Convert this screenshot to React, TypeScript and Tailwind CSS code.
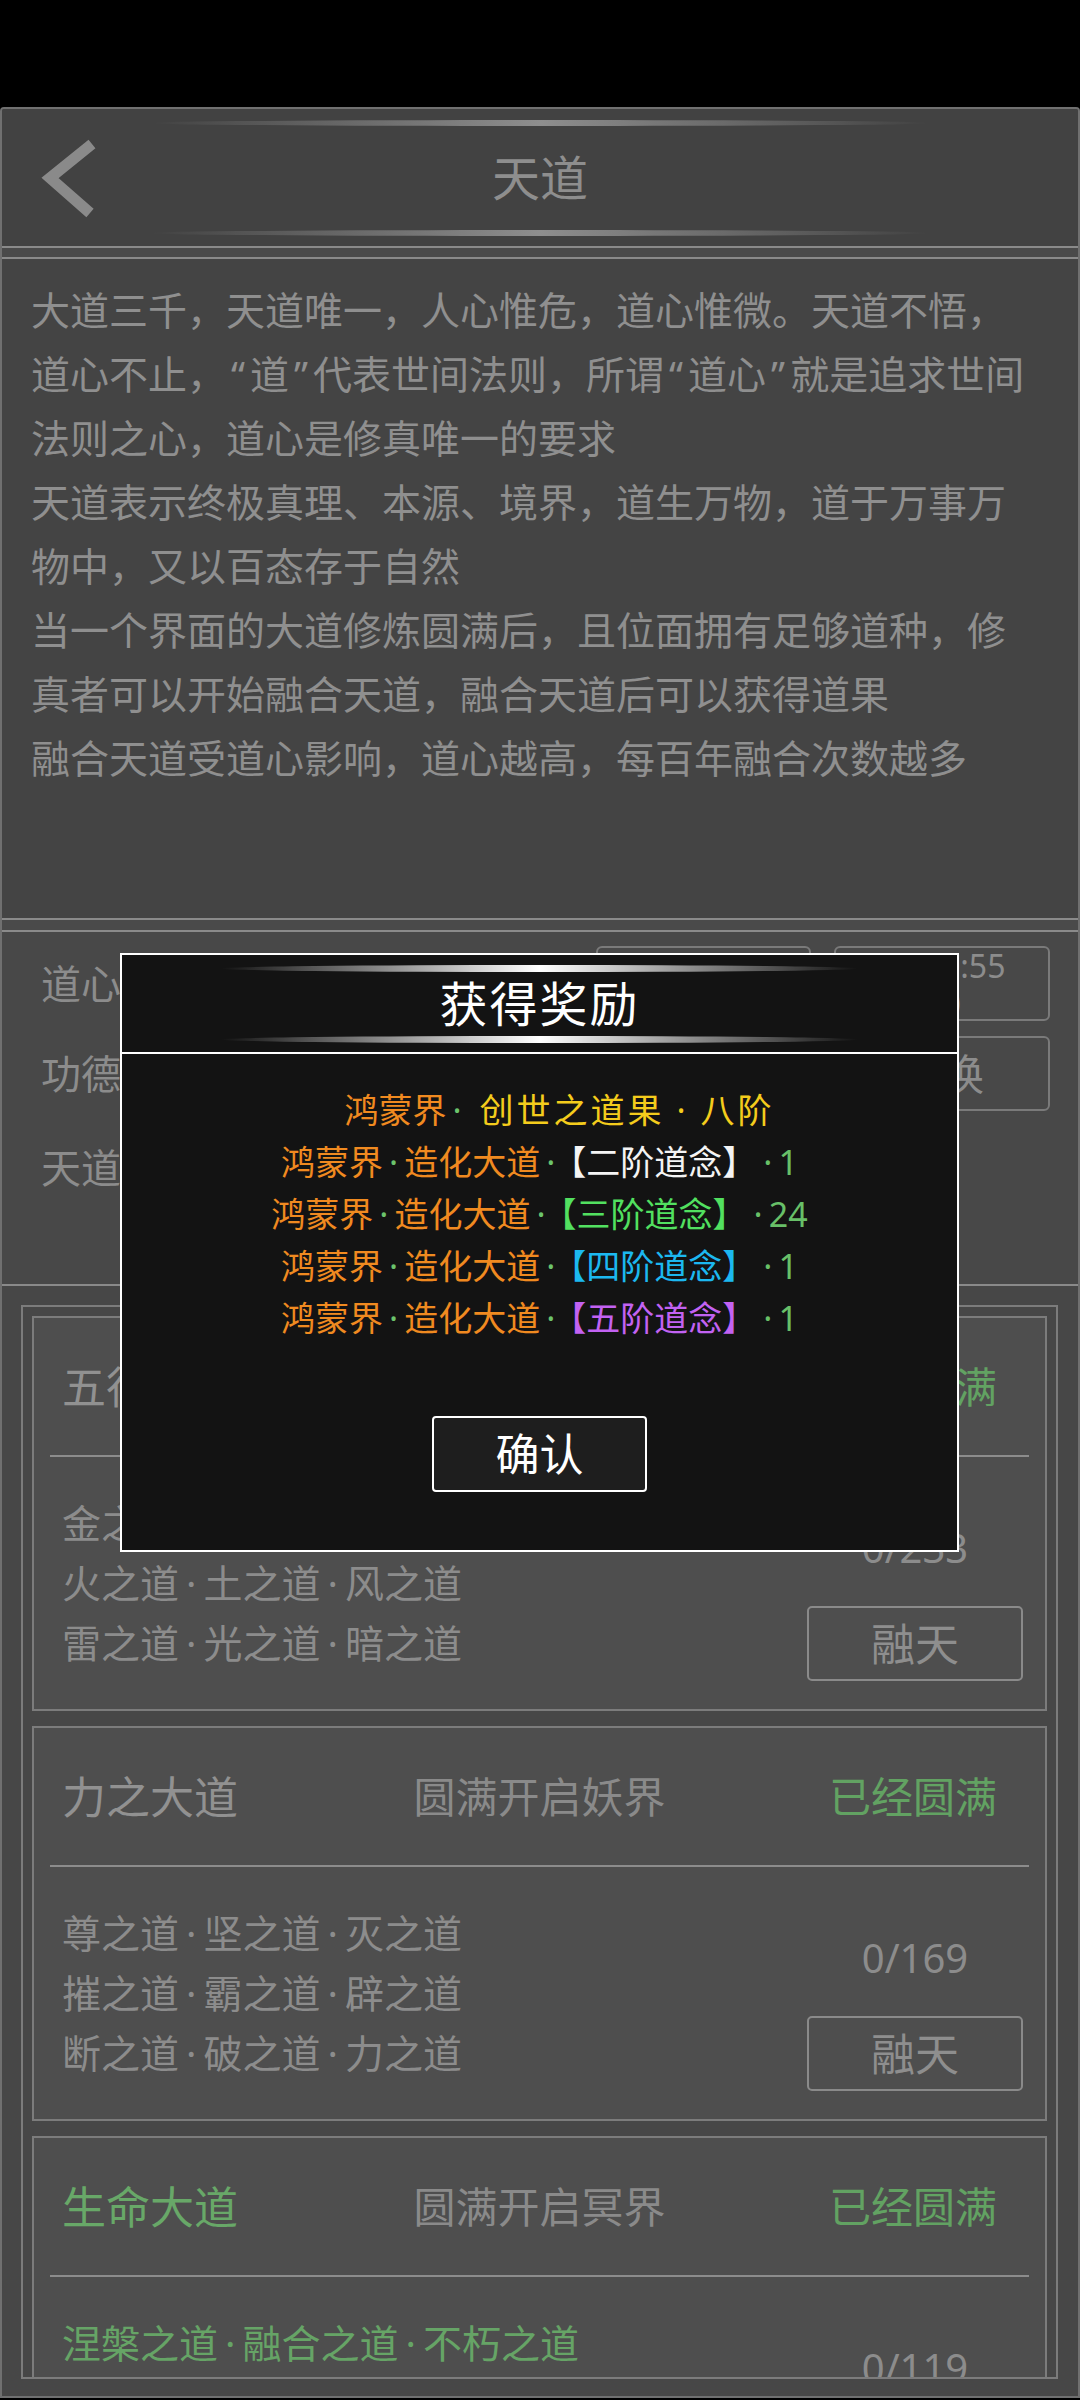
import React from 'react';

const lore = [
  '大道三千，天道唯一，人心惟危，道心惟微。天道不悟，',
  '道心不止，“道”代表世间法则，所谓“道心”就是追求世间',
  '法则之心，道心是修真唯一的要求',
  '天道表示终极真理、本源、境界，道生万物，道于万事万',
  '物中，又以百态存于自然',
  '当一个界面的大道修炼圆满后，且位面拥有足够道种，修',
  '真者可以开始融合天道，融合天道后可以获得道果',
  '融合天道受道心影响，道心越高，每百年融合次数越多',
];

type Dao = {
  name: string;
  nameGreen?: boolean;
  unlock: string;
  items: string[];
  itemsGreen?: boolean;
  progress: string;
};

const daos: Dao[] = [
  {
    name: '五行大道',
    unlock: '圆满开启人界',
    items: ['金之道·木之道·水之道', '火之道·土之道·风之道', '雷之道·光之道·暗之道'],
    progress: '0/233',
  },
  {
    name: '力之大道',
    unlock: '圆满开启妖界',
    items: ['尊之道·坚之道·灭之道', '摧之道·霸之道·辟之道', '断之道·破之道·力之道'],
    progress: '0/169',
  },
  {
    name: '生命大道',
    nameGreen: true,
    unlock: '圆满开启冥界',
    items: ['涅槃之道·融合之道·不朽之道', '轮回之道·造化之道·长生之道', '枯荣之道·轮转之道·生命之道'],
    itemsGreen: true,
    progress: '0/119',
  },
];

const rewards = [
  { tag: '【二阶道念】', color: 'text-[#f4f4f4]', count: '1' },
  { tag: '【三阶道念】', color: 'text-[#52e060]', count: '24' },
  { tag: '【四阶道念】', color: 'text-[#1cb8f0]', count: '1' },
  { tag: '【五阶道念】', color: 'text-[#c262f2]', count: '1' },
];

// narrow latin middle dots / quotes get a little air so the rows keep the game's widths
const spaced = (text: string) =>
  text.split(/([·“”])/).map((part, i) =>
    part === '·' ? (
      <span key={i} className="mx-[7px]">·</span>
    ) : part === '“' || part === '”' ? (
      <span key={i} className="mx-[5px]">{part}</span>
    ) : (
      part
    ),
  );

const Dot: React.FC<{ className?: string }> = ({ className }) => (
  <span className={className}>
    <span className="mx-[6px]">·</span>
  </span>
);

const DaoCard: React.FC<{ dao: Dao }> = ({ dao }) => (
  <div className="h-[395px] shrink-0 border-2 border-[#7c7c7c] bg-[#4e4e4e] flex flex-col">
    <div className="h-[137px] grid grid-cols-[1fr_auto_1fr] items-center px-[28px]">
      <span className={dao.nameGreen ? 'text-[44px] text-[#68a868]' : 'text-[44px] text-[#919191]'}>{dao.name}</span>
      <span className="text-[42px] text-[#8a8a8a]">{dao.unlock}</span>
      <span className="text-[42px] text-[#62a262] text-right pr-[20px]">已经圆满</span>
    </div>
    <div className="h-[2px] bg-[#8c8c8c] mx-[16px]" />
    <div className="flex flex-1">
      <div className="flex-1 pl-[28px] pt-[36px]">
        {dao.items.map((line) => (
          <div
            key={line}
            className={
              dao.itemsGreen
                ? 'text-[39px] leading-[60px] whitespace-nowrap text-[#66a466]'
                : 'text-[39px] leading-[60px] whitespace-nowrap text-[#8c8c8c]'
            }
          >
            {spaced(line)}
          </div>
        ))}
      </div>
      <div className="w-[216px] mr-[22px] flex flex-col items-center pt-[66px]">
        <div className="h-[50px] leading-[50px] text-[40px] text-[#8c8c8c]">{dao.progress}</div>
        <div className="mt-[33px] w-[216px] h-[75px] border-2 border-[#8a8a8a] rounded-[5px] flex items-center justify-center text-[44px] text-[#8e8e8e]">
          融天
        </div>
      </div>
    </div>
  </div>
);

const App: React.FC = () => {
  return (
    <div className="relative w-[1080px] h-[2400px] bg-black overflow-hidden font-['Noto_Sans','Noto_Sans_CJK_SC',sans-serif]">
      <div className="h-[107px]" />

      <div className="h-[2291px] border-2 border-[#707070] rounded-t-[4px] bg-[#474747] flex flex-col overflow-hidden">
        {/* header */}
        <div className="h-[137px] shrink-0 bg-[#424242] flex flex-col pt-[11px]">
          <div className="h-[6px] w-[780px] mx-auto rounded-[50%] bg-linear-to-r from-transparent via-[#8e8e8e] to-transparent" />
          <div className="h-[104px] grid grid-cols-[1fr_auto_1fr] items-center">
            <div className="pl-[38px] flex items-center">
              <svg width="60" height="84" viewBox="0 0 60 84" fill="none">
                <polyline points="52,8 10,42 50,77" stroke="#8a8a8a" strokeWidth="11" strokeLinejoin="miter" />
              </svg>
            </div>
            <div className="text-[48px] text-[#8e8e8e] leading-none">天道</div>
            <div />
          </div>
          <div className="h-[6px] w-[780px] mx-auto rounded-[50%] bg-linear-to-r from-transparent via-[#8e8e8e] to-transparent" />
        </div>

        <div className="h-[13px] shrink-0 border-y-2 border-[#8a8a8a] bg-[#4a4a4a]" />

        {/* lore text */}
        <div className="h-[659px] shrink-0 bg-[#444444] pl-[29px] pt-[19px] overflow-hidden">
          {lore.map((line) => (
            <div key={line} className="text-[39px] leading-[64px] whitespace-nowrap text-[#8f8f8f]">
              {spaced(line)}
            </div>
          ))}
        </div>

        <div className="h-[14px] shrink-0 border-y-2 border-[#8a8a8a] bg-[#4a4a4a]" />

        {/* stats */}
        <div className="h-[354px] shrink-0 border-b-2 border-[#8a8a8a] bg-[#484848] flex flex-col pt-[14px] pl-[39px] pr-[28px]">
          <div className="h-[75px] flex items-center justify-between">
            <span className="text-[40px] text-[#8c8c8c]">道心：1286</span>
            <div className="flex gap-[23px]">
              <div className="w-[215px] h-[75px] border-2 border-[#7a7a7a] rounded-[6px] flex items-center justify-center text-[40px] text-[#8c8c8c]">
                参悟
              </div>
              <div className="w-[216px] h-[75px] border-2 border-[#7a7a7a] rounded-[6px] flex flex-col items-center justify-center text-[32px] leading-[36px] text-[#8c8c8c]">
                <span>00:00:55</span>
                <span>(3)</span>
              </div>
            </div>
          </div>
          <div className="h-[75px] mt-[15px] flex items-center justify-between">
            <span className="text-[40px] text-[#8c8c8c]">功德：35700</span>
            <div className="w-[216px] h-[75px] border-2 border-[#7a7a7a] rounded-[6px] flex items-center justify-center text-[42px] text-[#8c8c8c]">
              兑换
            </div>
          </div>
          <div className="h-[75px] mt-[19px] flex items-center">
            <span className="text-[40px] text-[#8c8c8c]">天道：鸿蒙界</span>
          </div>
        </div>

        {/* dao list */}
        <div className="flex-1 pt-[19px] pl-[19px]">
          <div className="w-[1037px] h-[1074px] border-2 border-[#7c7c7c] p-[9px] flex flex-col gap-[15px] overflow-hidden">
            {daos.map((dao) => (
              <DaoCard key={dao.name} dao={dao} />
            ))}
          </div>
        </div>
      </div>

      {/* reward dialog */}
      <div className="absolute left-[120px] top-[953px] w-[839px] h-[599px] border-2 border-white bg-[#131313] flex flex-col">
        <div className="h-[99px] shrink-0 border-b-2 border-white flex flex-col pt-[10px]">
          <div className="h-[7px] w-[637px] mx-auto rounded-[50%] bg-linear-to-r from-transparent via-white to-transparent" />
          <div className="h-[64px] flex items-center justify-center text-[48px] text-white leading-none tracking-[2px]">获得奖励</div>
          <div className="h-[7px] w-[637px] mx-auto rounded-[50%] bg-linear-to-r from-transparent via-white to-transparent" />
        </div>
        <div className="flex flex-col items-center pt-[30px]">
          <div className="text-[34px] leading-[52px] whitespace-nowrap pl-[40px]">
            <span className="text-[#f08a20]">鸿蒙界</span>
            <Dot className="text-[#6cc46c]" />
            <span className="text-[#f4cc1c] tracking-[3px]">
              {' '}创世之道果<span className="mx-[12px]">·</span>八阶
            </span>
          </div>
          {rewards.map((r) => (
            <div key={r.tag} className="text-[34px] leading-[52px] whitespace-nowrap">
              <span className="text-[#f08a20]">鸿蒙界</span>
              <Dot className="text-[#6cc46c]" />
              <span className="text-[#f08a20]">造化大道</span>
              <Dot className="text-[#6cc46c]" />
              <span className={r.color + ' ml-[8px] mr-[18px]'}>{r.tag}</span>
              <Dot className="text-[#68c068]" />
              <span className="text-[#68c068]">{r.count}</span>
            </div>
          ))}
          <div className="mt-[72px] w-[215px] h-[76px] border-2 border-white rounded-[4px] bg-[#1e1e1e] flex items-center justify-center text-[44px] text-white">
            确认
          </div>
        </div>
      </div>
    </div>
  );
};

export default App;
